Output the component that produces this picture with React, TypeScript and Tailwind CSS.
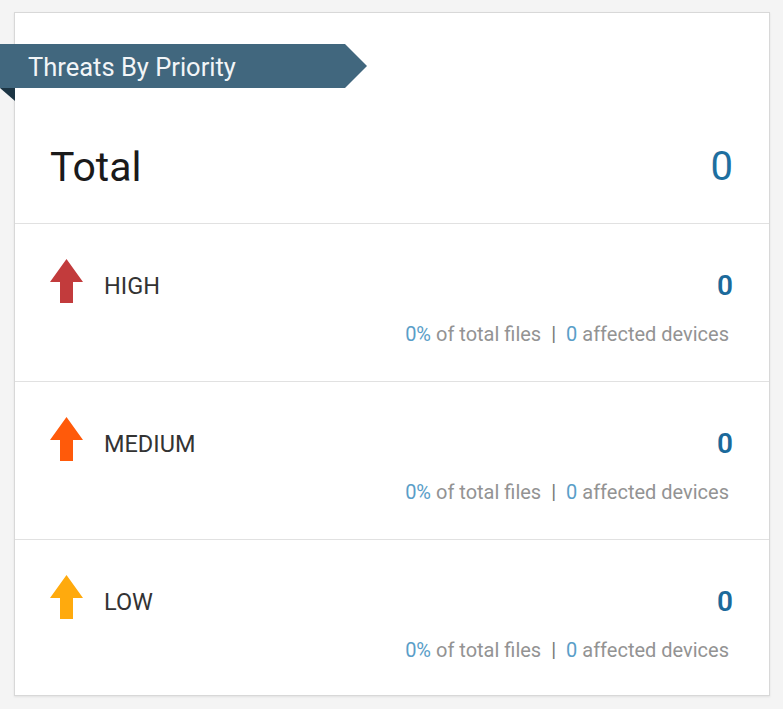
import React from "react";

type Level = { label: string; color: string };

const levels: Level[] = [
  { label: "HIGH", color: "#c23b3c" },
  { label: "MEDIUM", color: "#ff5a0a" },
  { label: "LOW", color: "#ffaa0d" },
];

function UpArrow({ color }: { color: string }) {
  return (
    <svg width="33" height="44" viewBox="0 0 33 44" className="shrink-0">
      <polygon points="16.5,0 33,23 23,23 23,44 10,44 10,23 0,23" fill={color} />
    </svg>
  );
}

function PriorityRow({ level, last }: { level: Level; last: boolean }) {
  return (
    <div className={`${last ? "h-[154px]" : "h-[158px] border-b border-[#e1e1e1]"} pl-[35px] pr-[36px] pt-[35px]`}>
      <div className="flex h-[44px] items-center">
        <UpArrow color={level.color} />
        <span className="ml-[21px] mt-[10px] text-[23.5px] leading-[26px] text-[#333]">{level.label}</span>
        <span className="ml-auto mt-[10px] text-[28px] font-semibold leading-[32px] text-[#1b6a9b]">0</span>
      </div>
      <p className="mt-[19px] pr-[4px] text-right text-[20px] leading-[24px] text-[#939393]">
        <span className="text-[#5a9ec8]">0%</span> of total files
        <span className="mx-[10px] text-[#777]">|</span>
        <span className="text-[#5a9ec8]">0</span> affected devices
      </p>
    </div>
  );
}

export default function App() {
  return (
    <div className="min-h-[709px] bg-[#f4f4f4] pt-[12px] font-['Roboto','Noto_Sans',sans-serif]">
      <div className="ml-[14px] h-[684px] w-[756px] border border-[#d8d8d8] bg-white shadow-[0_1px_2px_rgba(0,0,0,0.08)]">
        <div className="-ml-[15px] mt-[31px]">
          <div className="flex h-[44px] w-[367px] items-center bg-[#41677e] pl-[28px] pt-[3px] text-[25.5px] text-[#f2f5f7] [clip-path:polygon(0_0,345px_0,367px_50%,345px_100%,0_100%)]">
            Threats By Priority
          </div>
          <svg width="15" height="13" viewBox="0 0 15 13" className="block">
            <polygon points="0,0 15,0 15,13" fill="#1c3544" />
          </svg>
        </div>
        <div className="-mt-[13px] flex h-[136px] items-start border-b border-[#e1e1e1] pl-[35px] pr-[36px] pt-[55px]">
          <span className="text-[41px] leading-[48px] text-[#1a1a1a]">Total</span>
          <span className="ml-auto text-[40px] leading-[48px] text-[#1e6fa0]">0</span>
        </div>
        {levels.map((level, i) => (
          <PriorityRow key={level.label} level={level} last={i === levels.length - 1} />
        ))}
      </div>
    </div>
  );
}
